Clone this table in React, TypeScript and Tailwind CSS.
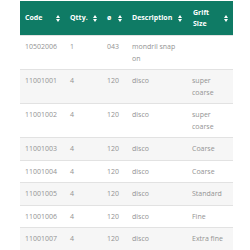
import React from "react";

const rows = [
  ["10502006", "1", "043", "mondril snap on", ""],
  ["11001001", "4", "120", "disco", "super coarse"],
  ["11001002", "4", "120", "disco", "super coarse"],
  ["11001003", "4", "120", "disco", "Coarse"],
  ["11001004", "4", "120", "disco", "Coarse"],
  ["11001005", "4", "120", "disco", "Standard"],
  ["11001006", "4", "120", "disco", "Fine"],
  ["11001007", "4", "120", "disco", "Extra fine"],
];

function Sort() {
  return (
    <svg width="4" height="7" viewBox="0 0 4 7" className="shrink-0">
      <path d="M0 3 L2 0 L4 3 Z" fill="white" />
      <path d="M0 4 L2 7 L4 4 Z" fill="white" />
    </svg>
  );
}

function Th({ children, extra = "" }: { children: React.ReactNode; extra?: string }) {
  return (
    <th className="p-0 align-middle">
      <div className={`flex h-[34px] items-center justify-between pr-[5px] ${extra} text-left`}>
        <span>{children}</span>
        <Sort />
      </div>
    </th>
  );
}

export default function App() {
  return (
    <div
      className="w-[250px] h-[250px] overflow-hidden bg-white pt-px pl-[20px]"
      style={{ fontFamily: '"Open Sans", sans-serif' }}
    >
      <table className="table-fixed border-collapse w-[213px] text-[7px] leading-[11.5px]">
        <colgroup>
          <col className="w-[45px]" />
          <col className="w-[37px]" />
          <col className="w-[25px]" />
          <col className="w-[60px]" />
          <col className="w-[46px]" />
        </colgroup>
        <thead>
          <tr className="bg-[#0f7b65] text-white font-bold">
            <Th extra="pl-[5px]">Code</Th>
            <Th extra="pl-[5px]">Qtty.</Th>
            <Th extra="pl-[5px]">ø</Th>
            <Th extra="pl-[5px]">Description</Th>
            <Th extra="pl-[6px]">
              Grift
              <br />
              Size
            </Th>
          </tr>
        </thead>
        <tbody className="text-[#939393]">
          {rows.map((r, i) => (
            <tr
              key={i}
              className={`${i % 2 === 1 ? "bg-[#f6f6f6]" : "bg-white"} border-t border-[#e2e2e2]`}
            >
              {r.map((c, j) => (
                <td key={j} className="pl-[5px] pr-[6px] py-[5px] align-top">
                  {c}
                </td>
              ))}
            </tr>
          ))}
        </tbody>
      </table>
    </div>
  );
}
